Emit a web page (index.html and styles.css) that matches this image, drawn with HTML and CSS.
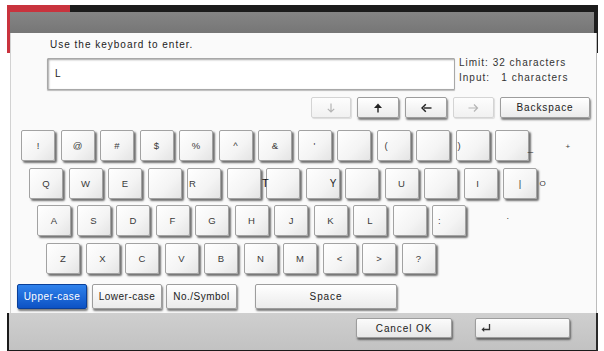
FILE: index.html
```html
<!DOCTYPE html>
<html>
<head>
<meta charset="utf-8">
<link rel="stylesheet" href="styles.css">
</head>
<body>
<div class="frame">
  <div class="topbar"><span class="red"></span></div>
  <div class="panel">
    <div class="header"></div>
    <div class="body">
      <p class="prompt">Use the keyboard to enter.</p>
      <div class="inputrow">
        <div class="input">L</div>
        <div class="info">
          <div>Limit: 32 characters</div>
          <div>Input:&nbsp;&nbsp; 1 characters</div>
        </div>
      </div>
      <div class="arrows">
        <div class="btn dis w40"><svg width="10" height="10" viewBox="0 0 10 10"><path d="M5 0.5V9M1.8 5.8L5 9L8.2 5.8" fill="none" stroke="#b5b5b5" stroke-width="1.2"/></svg></div>
        <div class="btn w42"><svg width="10" height="10" viewBox="0 0 10 10"><path d="M5 9.5V2" stroke="#222" stroke-width="1.4"/><path d="M5 0.5L9 5H1Z" fill="#222"/></svg></div>
        <div class="btn w42"><svg width="11" height="10" viewBox="0 0 11 10"><path d="M10.5 5H3" stroke="#222" stroke-width="1.4"/><path d="M4.8 1.2L1 5L4.8 8.8" fill="none" stroke="#222" stroke-width="1.5"/></svg></div>
        <div class="btn dis w41"><svg width="11" height="10" viewBox="0 0 11 10"><path d="M0.5 5H9.5M6 1.5L9.5 5L6 8.5" fill="none" stroke="#b5b5b5" stroke-width="1.2"/></svg></div>
        <div class="btn w90">Backspace</div>
      </div>
      <div class="keys">
        <div class="row r1">
          <div class="key">!</div>
          <div class="key">@</div>
          <div class="key">#</div>
          <div class="key">$</div>
          <div class="key">%</div>
          <div class="key">^</div>
          <div class="key">&amp;</div>
          <div class="key">'</div>
          <div class="key"></div>
          <div class="key start pl7">(</div>
          <div class="key"></div>
          <div class="key start pl1">)</div>
          <div class="key end"><span class="under">_</span></div>
          <div class="ghost pl31 small">+</div>
        </div>
        <div class="row r2">
          <div class="key">Q</div>
          <div class="key">W</div>
          <div class="key">E</div>
          <div class="key"></div>
          <div class="key start pl1">R</div>
          <div class="key"></div>
          <div class="key start"><span class="tee">T</span></div>
          <div class="key end pr2 dark">Y</div>
          <div class="key"></div>
          <div class="key">U</div>
          <div class="key"></div>
          <div class="key pr6">I</div>
          <div class="key">|</div>
          <div class="ghost"><span class="oh">O</span></div>
        </div>
        <div class="row r3">
          <div class="key">A</div>
          <div class="key">S</div>
          <div class="key">D</div>
          <div class="key">F</div>
          <div class="key">G</div>
          <div class="key">H</div>
          <div class="key">J</div>
          <div class="key">K</div>
          <div class="key">L</div>
          <div class="key"></div>
          <div class="key start pl5">:</div>
          <div class="ghost pl35 dot">.</div>
        </div>
        <div class="row r4">
          <div class="key">Z</div>
          <div class="key">X</div>
          <div class="key">C</div>
          <div class="key">V</div>
          <div class="key">B</div>
          <div class="key">N</div>
          <div class="key">M</div>
          <div class="key">&lt;</div>
          <div class="key">&gt;</div>
          <div class="key">?</div>
        </div>
      </div>
      <div class="modes">
        <div class="btn mode active">Upper-case</div>
        <div class="btn mode">Lower-case</div>
        <div class="btn mode m2">No./Symbol</div>
        <div class="btn space">Space</div>
      </div>
    </div>
    <div class="footer">
      <div class="btn fbtn">Cancel OK</div>
      <div class="btn fbtn enter"><svg width="10" height="8" viewBox="0 0 10 8"><path d="M8.5 0V5.5H2" fill="none" stroke="#333" stroke-width="1.3"/><path d="M0.5 5.5L3.2 3V8Z" fill="#333"/></svg></div>
    </div>
  </div>
</div>
</body>
</html>
```

FILE: styles.css
```css
html, body {
  margin: 0;
  padding: 0;
  background: #ffffff;
}
body {
  font-family: "Liberation Sans", Arial, sans-serif;
  color: #333;
}
.frame {
  margin: 5px 0 0 7px;
  width: 591px;
  background:
    linear-gradient(#c9333d, #c9333d) left top / 3px 48px no-repeat,
    linear-gradient(#1e1e1e, #1e1e1e) right top / 4px 48px no-repeat;
}
.topbar {
  height: 7px;
  background: #1c1c1c;
  display: flex;
}
.topbar .red {
  width: 63px;
  background: #c9333d;
}
.panel {
  margin: 0 1px 0 3px;
}
.header {
  height: 21px;
  margin-right: 3px;
  background: linear-gradient(#858585, #767676);
}
.body {
  height: 280px;
  box-sizing: border-box;
  background: #fafafa;
  border-left: 1px solid #d2d2d2;
  border-right: 1px solid #bcbcbc;
}
.prompt {
  margin: 0;
  padding: 6px 0 0 39px;
  font-size: 10px;
  line-height: 12px;
  letter-spacing: 1px;
  color: #222;
}
.inputrow {
  display: flex;
  margin-top: 7px;
}
.input {
  margin-left: 36px;
  width: 408px;
  height: 32px;
  box-sizing: border-box;
  border: 1px solid #a8a8a8;
  border-radius: 1px;
  box-shadow: inset 1px 1px 2px rgba(0,0,0,0.35), 0 1px 1px rgba(0,0,0,0.25);
  background: #fff;
  font-size: 10px;
  line-height: 30px;
  padding-left: 7px;
  color: #222;
}
.info {
  margin: -3px 0 0 4px;
  font-size: 10px;
  line-height: 15px;
  letter-spacing: 1px;
  white-space: nowrap;
  color: #333;
}
.arrows {
  display: flex;
  justify-content: flex-end;
  gap: 6px;
  margin-top: 7px;
  padding-right: 6px;
}
.btn {
  height: 21px;
  box-sizing: border-box;
  border: 1px solid #9d9d9d;
  border-radius: 2px;
  background: linear-gradient(#ffffff, #ebebeb);
  box-shadow: 1px 2px 2px rgba(0,0,0,0.5);
  display: flex;
  align-items: center;
  justify-content: center;
  font-size: 10px;
  letter-spacing: 0.9px;
  color: #222;
}
.btn.dis {
  border-color: #d4d4d4;
  box-shadow: 1px 1px 1px rgba(0,0,0,0.12);
  background: linear-gradient(#fdfdfd, #f1f1f1);
}
.w40 { width: 40px; }
.w41 { width: 41px; }
.w42 { width: 42px; }
.w90 { width: 90px; }
.keys {
  margin-top: 12px;
  display: flex;
  flex-direction: column;
  gap: 5.5px;
}
.row {
  display: flex;
  gap: 5.5px;
  height: 32px;
}
.r1 { padding-left: 10px; }
.r2 { padding-left: 18px; }
.r3 { padding-left: 26px; }
.r4 { padding-left: 35px; }
.key {
  width: 34px;
  height: 31px;
  box-sizing: border-box;
  border: 1px solid #a2a2a2;
  border-radius: 2px;
  background: linear-gradient(135deg, #ffffff 0%, #f4f4f4 60%, #e4e4e4 100%);
  box-shadow: 2px 2px 2px rgba(0,0,0,0.55);
  display: flex;
  align-items: center;
  justify-content: center;
  font-size: 9.5px;
  color: #3a3a3a;
}
.start { justify-content: flex-start; }
.end { justify-content: flex-end; }
.pl1 { padding-left: 1px; }
.pl5 { padding-left: 5px; }
.pl7 { padding-left: 7px; }
.pr2 { padding-right: 2px; }
.pr6 { padding-right: 6px; }
.dark { color: #222; font-size: 10px; }
.tee {
  margin-left: -5px;
  font-size: 11px;
  color: #111;
}
.under {
  margin-right: -5px;
  margin-top: 4px;
}
.ghost {
  display: flex;
  align-items: center;
  font-size: 9px;
  color: #3a3a3a;
}
.pl31 { padding-left: 31px; }
.pl35 { padding-left: 35px; }
.small { font-size: 8px; }
.dot { align-items: flex-start; padding-top: 6px; }
.oh {
  margin-left: -3px;
  font-size: 8px;
}
.modes {
  display: flex;
  gap: 5px;
  margin-top: 9px;
  padding-left: 6px;
}
.mode {
  width: 70px;
  height: 25px;
  letter-spacing: 0.5px;
}
.mode.m2 {
  width: 71px;
  margin-left: -1px;
}
.mode.active {
  background: linear-gradient(#2f82ec, #0d52c4);
  border-color: #0a3f98;
  color: #ffffff;
}
.space {
  width: 142px;
  height: 25px;
  margin-left: 13px;
}
.footer {
  margin: 0 -1px 0 -3px;
  height: 32px;
  background: linear-gradient(#cfcfcf, #c2c2c2);
  border-left: 2px solid #1b1b1b;
  border-right: 2px solid #2a2a2a;
  border-bottom: 3px solid #1b1b1b;
  display: flex;
  justify-content: flex-end;
  align-items: flex-start;
  gap: 23px;
  padding: 5px 26px 0 0;
  box-sizing: content-box;
}
.fbtn {
  width: 96px;
  height: 20px;
  background: linear-gradient(#fbfbfb, #e8e8e8);
}
.fbtn.enter {
  width: 95px;
  justify-content: flex-start;
  padding-left: 5px;
}
```
